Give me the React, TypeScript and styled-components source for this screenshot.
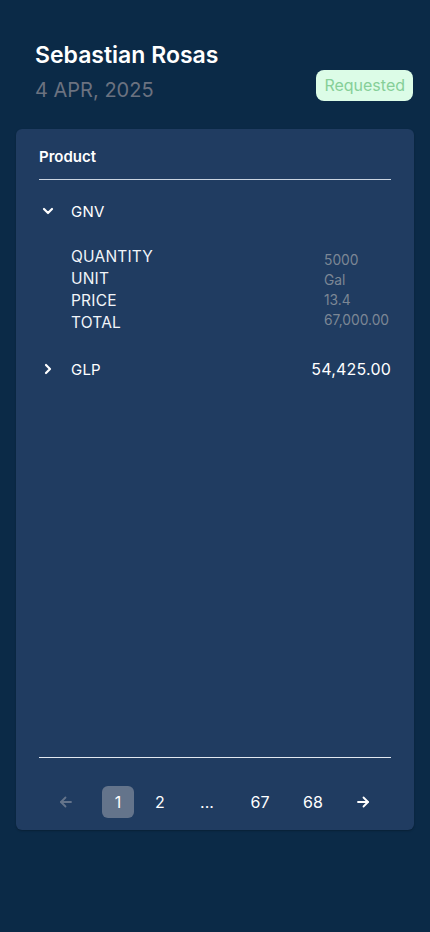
import React from "react";
import styled, { createGlobalStyle } from "styled-components";

const Global = createGlobalStyle`
  html, body { margin: 0; padding: 0; background: #0b2a47; }
  body { font-family: Inter, "Noto Sans", sans-serif; -webkit-font-smoothing: antialiased; }
  * { box-sizing: border-box; }
`;

const Page = styled.div`
  width: 430px;
  height: 932px;
  background: #0b2a47;
  padding: 40px 16px 0 16px;
  display: flex;
  flex-direction: column;
`;

const Header = styled.div`
  display: flex;
  justify-content: space-between;
  align-items: flex-end;
  padding: 0 1px 0 19px;
`;

const TitleBlock = styled.div`
  display: flex;
  flex-direction: column;
  gap: 8px;
`;

const Name = styled.h1`
  margin: 0;
  font-size: 23px;
  line-height: 30px;
  font-weight: 600;
  color: #ffffff;
`;

const DateText = styled.div`
  font-size: 20px;
  line-height: 24px;
  color: #6b7280;
`;

const Badge = styled.span`
  background: #dcfce7;
  color: #86cf98;
  font-size: 16px;
  line-height: 31px;
  height: 31px;
  padding: 0 8px;
  border-radius: 8px;
  margin-bottom: 1px;
`;

const Card = styled.div`
  margin-top: 27px;
  height: 701px;
  background: #203c61;
  border-radius: 6px;
  padding: 18px 23px 0 23px;
  display: flex;
  flex-direction: column;
  box-shadow: 0 1px 2px rgba(0,0,0,0.25);
`;

const ColHead = styled.div`
  font-size: 15px;
  font-weight: 600;
  color: #ffffff;
  line-height: 20px;
  padding-bottom: 12px;
  border-bottom: 1px solid #cbd5e1;
`;

const Body = styled.div`
  flex: 1;
  display: flex;
  flex-direction: column;
`;

const Row = styled.div<{ $top: number }>`
  display: flex;
  align-items: center;
  margin-top: ${(p) => p.$top}px;
  height: 24px;
  color: #ffffff;
`;

const Chevron = styled.span`
  width: 32px;
  display: flex;
  align-items: center;
  padding-left: 3px;
`;

const RowLabel = styled.span`
  flex: 1;
  font-size: 15px;
  letter-spacing: 0.2px;
`;

const RowValue = styled.span`
  font-size: 16px;
  letter-spacing: 0.2px;
`;

const Details = styled.div`
  margin-top: 23px;
  padding-left: 32px;
  display: flex;
  align-items: flex-start;
`;

const LabelCol = styled.div`
  flex: 1;
  display: flex;
  flex-direction: column;
`;

const ValueCol = styled.div`
  width: 67px;
  display: flex;
  flex-direction: column;
  padding-top: 4px;
`;

const DetailLabel = styled.span`
  font-size: 15.5px;
  line-height: 22px;
  color: #f1f5f9;
  letter-spacing: 0.2px;
`;

const DetailValue = styled.span`
  font-size: 13.8px;
  line-height: 20px;
  color: #7c8795;
`;

const Footer = styled.div`
  border-top: 1px solid #e2e8f0;
  height: 73px;
  padding-top: 28px;
`;

const Pager = styled.div`
  display: grid;
  grid-template-columns: 52px 52px 32px 62px 44px 62px 38px;
  margin-left: 1px;
  align-items: center;
  justify-items: center;
`;

const PageBtn = styled.span<{ $active?: boolean; $muted?: boolean }>`
  min-width: 32px;
  height: 32px;
  border-radius: 6px;
  display: flex;
  align-items: center;
  justify-content: center;
  font-size: 16px;
  color: ${(p) => (p.$muted ? "#64748b" : "#ffffff")};
  background: ${(p) => (p.$active ? "#64748b" : "transparent")};
`;

const Chev = ({ down }: { down?: boolean }) => (
  <svg width="12" height="12" viewBox="0 0 12 12" fill="none" stroke="#fff" strokeWidth="2.2" strokeLinecap="round" strokeLinejoin="round">
    {down ? <polyline points="2,4 6,8 10,4" /> : <polyline points="4,2 8,6 4,10" />}
  </svg>
);

const Arrow = ({ left, color }: { left?: boolean; color: string }) => (
  <svg width="14" height="14" viewBox="0 0 14 14" fill="none" stroke={color} strokeWidth="1.8" strokeLinecap="round" strokeLinejoin="round">
    {left ? (
      <>
        <line x1="12" y1="7" x2="2" y2="7" />
        <polyline points="6.5,2.5 2,7 6.5,11.5" />
      </>
    ) : (
      <>
        <line x1="2" y1="7" x2="12" y2="7" />
        <polyline points="7.5,2.5 12,7 7.5,11.5" />
      </>
    )}
  </svg>
);

export default function App() {
  const details = [
    ["QUANTITY", "5000"],
    ["UNIT", "Gal"],
    ["PRICE", "13.4"],
    ["TOTAL", "67,000.00"],
  ];
  return (
    <>
      <Global />
      <Page>
        <Header>
          <TitleBlock>
            <Name>Sebastian Rosas</Name>
            <DateText>4 APR, 2025</DateText>
          </TitleBlock>
          <Badge>Requested</Badge>
        </Header>
        <Card>
          <ColHead>Product</ColHead>
          <Body>
            <Row $top={19}>
              <Chevron><Chev down /></Chevron>
              <RowLabel>GNV</RowLabel>
            </Row>
            <Details>
              <LabelCol>
                {details.map(([l]) => (
                  <DetailLabel key={l}>{l}</DetailLabel>
                ))}
              </LabelCol>
              <ValueCol>
                {details.map(([l, v]) => (
                  <DetailValue key={l}>{v}</DetailValue>
                ))}
              </ValueCol>
            </Details>
            <Row $top={23}>
              <Chevron><Chev /></Chevron>
              <RowLabel>GLP</RowLabel>
              <RowValue>54,425.00</RowValue>
            </Row>
          </Body>
          <Footer>
            <Pager>
              <PageBtn $muted><Arrow left color="#64748b" /></PageBtn>
              <PageBtn $active>1</PageBtn>
              <PageBtn>2</PageBtn>
              <PageBtn>...</PageBtn>
              <PageBtn>67</PageBtn>
              <PageBtn>68</PageBtn>
              <PageBtn><Arrow color="#ffffff" /></PageBtn>
            </Pager>
          </Footer>
        </Card>
      </Page>
    </>
  );
}
